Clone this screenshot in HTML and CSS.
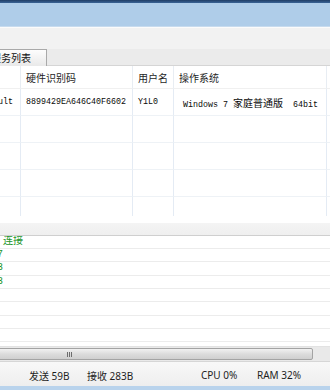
FILE: index.html
```html
<!DOCTYPE html>
<html lang="zh">
<head>
<meta charset="utf-8">
<title>服务列表</title>
<link rel="stylesheet" href="styles.css">
</head>
<body>
<div class="app">
  <div class="titlebar"></div>
  <div class="ribbon"></div>
  <div class="toolbar"></div>
  <div class="tabstrip"><div class="tab">服务列表</div></div>
  <div class="table">
    <div class="row head">
      <div class="cell c1">名称</div>
      <div class="cell c2">硬件识别码</div>
      <div class="cell c3">用户名</div>
      <div class="cell c4">操作系统</div>
      <div class="cell c5"></div>
    </div>
    <div class="row data">
      <div class="cell c1 mono">Default</div>
      <div class="cell c2 mono">8899429EA646C40F6602</div>
      <div class="cell c3 mono">Y1L0</div>
      <div class="cell c4 mono">Windows 7 <span class="cjk">家庭普通版</span>&nbsp; 64bit</div>
      <div class="cell c5"></div>
    </div>
    <div class="row data"><div class="cell c1"></div><div class="cell c2"></div><div class="cell c3"></div><div class="cell c4"></div><div class="cell c5"></div></div>
    <div class="row data"><div class="cell c1"></div><div class="cell c2"></div><div class="cell c3"></div><div class="cell c4"></div><div class="cell c5"></div></div>
    <div class="row data"><div class="cell c1"></div><div class="cell c2"></div><div class="cell c3"></div><div class="cell c4"></div><div class="cell c5"></div></div>
    <div class="row data last"><div class="cell c1"></div><div class="cell c2"></div><div class="cell c3"></div><div class="cell c4"></div><div class="cell c5"></div></div>
  </div>
  <div class="splitter"></div>
  <div class="log">
    <div class="log-row">客户端 [1] 连接</div>
    <div class="log-row">10.0.0.107</div>
    <div class="log-row">10.0.0.103</div>
    <div class="log-row">10.0.0.113</div>
    <div class="log-row"></div>
    <div class="log-row"></div>
    <div class="log-row"></div>
    <div class="log-row"></div>
    <div class="log-row"></div>
  </div>
  <div class="hscroll"><div class="thumb"><span class="grip"></span></div></div>
  <div class="status">
    <span class="pane p1">发送 59B</span>
    <span class="pane p2">接收 283B</span>
    <span class="pane p3">CPU 0%</span>
    <span class="pane p4">RAM 32%</span>
  </div>
  <div class="bottomline"></div>
</div>
</body>
</html>
```
FILE: styles.css
```css
* { box-sizing: border-box; }
html, body { margin: 0; padding: 0; }
body {
  width: 330px;
  height: 390px;
  overflow: hidden;
  background: #ffffff;
  font-family: "Noto Sans CJK SC", "Noto Sans", sans-serif;
  color: #1a1a1a;
}
.app {
  display: flex;
  flex-direction: column;
  width: 330px;
  height: 390px;
  overflow: hidden;
}
.titlebar {
  height: 3px;
  background: linear-gradient(#203e66, #3a6496);
}
.ribbon {
  height: 24px;
  background: #afcde9;
  border-bottom: 1px solid #c7dbee;
}
.toolbar {
  height: 22px;
  background: #f2f2f2;
  border-top: 1px solid #fbfbfb;
}
.tabstrip {
  height: 17px;
  background: #ebebeb;
  display: flex;
  align-items: flex-end;
  border-bottom: 1px solid #d5d5d5;
}
.tab {
  margin-left: -18px;
  margin-bottom: -1px;
  width: 65px;
  height: 17px;
  padding-left: 8px;
  font-size: 10px;
  line-height: 16px;
  background: linear-gradient(#fdfdfd, #e9e9e9);
  border: 1px solid #a9a9a9;
  border-bottom: none;
  color: #111;
}
.table {
  height: 157px;
  background: #fff;
  padding-bottom: 7px;
  overflow: hidden;
}
.row {
  display: grid;
  grid-template-columns: 48px 112px 41px 153px 1fr;
  margin-left: -27px;
}
.row.head { height: 23px; }
.row.data { height: 27px; }
.row.last { height: 19px; }
.cell {
  border-right: 1px solid #e4ebf4;
  border-bottom: 1px solid #eef2f6;
  padding-left: 5px;
  white-space: nowrap;
  overflow: hidden;
}
.row.last .cell { border-bottom: none; }
.cell.c5 { border-right: none; }
.head .cell {
  font-size: 10px;
  line-height: 24px;
  color: #1e1e1e;
  border-right-color: #e8edf3;
  border-bottom-color: #f0f0f0;
}
.mono {
  font-family: "Liberation Mono", "Noto Sans CJK SC", monospace;
  font-size: 8.33px;
  line-height: 27px;
  color: #0a0a0a;
}
.c4.mono { padding-left: 9px; }
.cjk {
  font-family: "Noto Sans CJK SC", sans-serif;
  font-size: 10px;
}
.splitter {
  height: 13px;
  background: linear-gradient(#f4f4f4, #efefef);
  border-bottom: 1px solid #cfcfcf;
}
.log {
  height: 110px;
  overflow: hidden;
  background: #fff;
  margin-left: -57px;
}
.log-row {
  height: 13.33px;
  border-bottom: 1px solid #ececec;
  font-family: "Liberation Mono", "Noto Sans CJK SC", monospace;
  font-size: 10px;
  line-height: 12px;
  color: #22952a;
  white-space: nowrap;
}
.log-row:first-child { height: 13px; }
.hscroll {
  height: 15px;
  background: #e9e9e9;
  border-top: 1px solid #e2e2e2;
  padding: 1px 0;
  overflow: hidden;
}
.thumb {
  margin-left: -173px;
  width: 486px;
  height: 12px;
  border: 1px solid #a3a3a3;
  border-radius: 2px;
  background: linear-gradient(#f1f1f1, #dcdcdc 50%, #cfcfcf);
  display: flex;
  align-items: center;
  justify-content: center;
}
.grip {
  width: 6px;
  height: 5px;
  background: repeating-linear-gradient(90deg, #6d6d6d 0 1px, transparent 1px 2px);
}
.status {
  height: 25px;
  background: linear-gradient(#f8f8f8, #eeeeee);
  border-top: 1px solid #d6d6d6;
  display: flex;
  align-items: center;
  padding-left: 29px;
  padding-top: 2px;
  font-size: 10px;
  color: #1e1e1e;
  font-family: "Noto Sans", "Noto Sans CJK SC", sans-serif;
}
.pane { white-space: nowrap; }
.p1 { width: 58px; }
.p2 { width: 114px; }
.p3 { width: 56px; }
.bottomline {
  flex: 1;
  background: #b9d3ec;
}
```
